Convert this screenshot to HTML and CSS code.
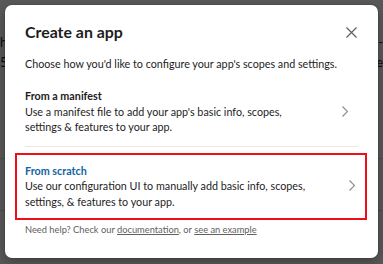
FILE: index.html
```html
<!DOCTYPE html>
<html lang="en">

<head>
  <meta charset="UTF-8">
  <meta name="viewport" content="width=device-width, initial-scale=1.0">
  <title>Create an app</title>
  <link rel="stylesheet" href="styles.css">
</head>

<body>
  <div class="page">
    <div class="page-row">
      <span class="page-text">h</span>
      <span class="page-text">-</span>
    </div>
    <div class="page-row">
      <span class="page-text">5</span>
      <span class="page-text">ve</span>
    </div>
    <div class="page-rule"></div>
    <div class="page-rule page-rule-low"></div>
  </div>

  <div class="overlay">
    <div class="modal">
      <div class="modal-header">
        <h1>Create an app</h1>
        <button class="close-btn" aria-label="Close">
          <svg width="11" height="11" viewBox="0 0 11 11">
            <path d="M0.5 0.5 L10.5 10.5 M10.5 0.5 L0.5 10.5" stroke="#5e5d60" stroke-width="1.2" fill="none" />
          </svg>
        </button>
      </div>

      <p class="modal-intro">Choose how you'd like to configure your app's scopes and settings.</p>

      <div class="option option-manifest">
        <div class="option-text">
          <div class="option-title">From a manifest</div>
          <div class="option-desc">Use a manifest file to add your app's basic info, scopes, settings &amp; features to your app.</div>
        </div>
        <svg class="chevron" width="6" height="11" viewBox="0 0 6 11">
          <path d="M0.5 0.5 L5.5 5.5 L0.5 10.5" stroke="#8a8a8c" stroke-width="1.1" fill="none" />
        </svg>
      </div>

      <div class="option option-scratch">
        <div class="option-text">
          <div class="option-title">From scratch</div>
          <div class="option-desc">Use our configuration UI to manually add basic info, scopes, settings, &amp; features to your app.</div>
        </div>
        <svg class="chevron" width="6" height="11" viewBox="0 0 6 11">
          <path d="M0.5 0.5 L5.5 5.5 L0.5 10.5" stroke="#8a8a8c" stroke-width="1.1" fill="none" />
        </svg>
      </div>

      <p class="modal-help">Need help? Check our <a href="#">documentation</a>, or <a href="#">see an example</a></p>
    </div>
  </div>
</body>

</html>
```

FILE: styles.css
```css
* {
  margin: 0;
  padding: 0;
  box-sizing: border-box;
}

body {
  font-family: Lato, 'Noto Sans', sans-serif;
  width: 383px;
  height: 264px;
  overflow: hidden;
  background-color: #ffffff;
  color: #1d1c1d;
  position: relative;
}

/* page behind the dialog */
.page {
  padding-top: 32px;
}

.page-row {
  display: flex;
  justify-content: space-between;
  font-size: 13px;
  line-height: 20px;
}

.page-text {
  color: #1d1c1d;
}

.page-rule {
  margin-top: 86px;
  border-top: 1px solid #dddddd;
}

.page-rule-low {
  margin-top: 51px;
}

.overlay {
  position: absolute;
  inset: 0;
  background-color: rgba(0, 0, 0, 0.65);
  display: flex;
  justify-content: center;
  padding-top: 5px;
}

.modal {
  width: 373px;
  height: 253px;
  background-color: #ffffff;
  border-radius: 7px;
  box-shadow: 0 0 0 1px rgba(0, 0, 0, 0.08), 0 4px 12px rgba(0, 0, 0, 0.3);
  display: flex;
  flex-direction: column;
}

.modal-header {
  display: flex;
  justify-content: space-between;
  align-items: center;
  padding: 14px 21px 0 20px;
}

.modal-header h1 {
  font-size: 15.9px;
  font-weight: 700;
  line-height: 26px;
}

.close-btn {
  background: none;
  border: none;
  display: flex;
  cursor: pointer;
}

.modal-intro {
  font-size: 10.75px;
  line-height: 16px;
  padding: 11px 20px 0 20px;
}

.option {
  display: flex;
  align-items: center;
  justify-content: space-between;
  font-size: 10.75px;
  line-height: 15.5px;
}

.option-manifest {
  margin: 16px 20px 0 20px;
  padding: 0 10px 11px 0;
  border-bottom: 1px solid #e8e8e8;
}

.option-scratch {
  margin: 6px 11px 0 10px;
  padding: 8px 10px 9px 8px;
  border: 2px solid #ee0f1a;
}

.option-title {
  font-weight: 700;
}

.option-scratch .option-title {
  color: #1264a3;
}

.option-desc {
  width: 292px;
}

.chevron {
  flex-shrink: 0;
}

.modal-help {
  font-size: 9.3px;
  line-height: 14px;
  color: #616061;
  padding: 3px 20px 0 20px;
}

.modal-help a {
  color: #616061;
  text-decoration: underline;
}
```
